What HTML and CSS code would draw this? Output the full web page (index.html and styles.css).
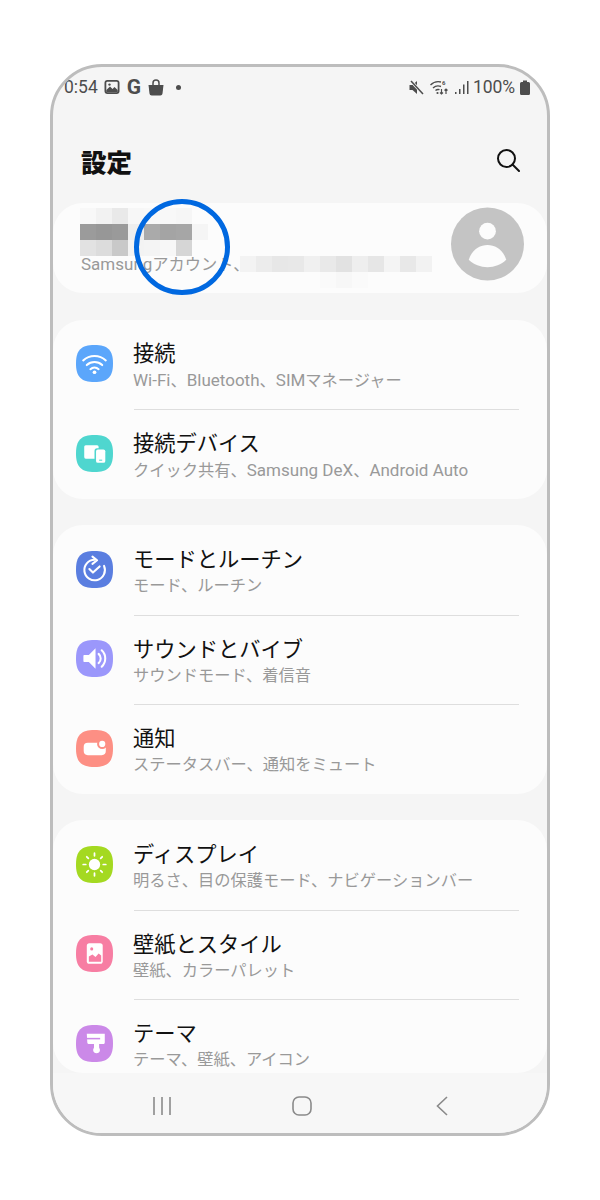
FILE: index.html
```html
<!DOCTYPE html>
<html lang="ja">
<head>
<meta charset="utf-8">
<title>設定</title>
<link rel="stylesheet" href="styles.css">
</head>
<body>
<div class="phone">
  <div class="status">
    <span class="time">0:54</span>
    <svg class="st-img" width="16" height="16" viewBox="0 0 16 16"><rect x="0.500" y="1" width="15" height="14" rx="3" fill="#4d4d4d"/><rect x="2.300" y="2.800" width="11.400" height="10.400" rx="1" fill="#f5f5f5"/><path d="M2.300 11l3.700-3.500 2.500 2.500 2-2 3.200 3V13.200H2.300z" fill="#4d4d4d"/><circle cx="5.500" cy="5.600" r="1.200" fill="#4d4d4d"/></svg>
    <span class="st-g">G</span>
    <svg class="st-bag" width="16" height="17" viewBox="0 0 16 17"><path d="M0.500 6h15l-1 8.500c-.2 1.200-1 2-2.200 2H3.700C2.500 16.500 1.700 15.700 1.500 14.500z" fill="#4d4d4d"/><path d="M5 6V4a3 3 0 0 1 6 0v2" fill="none" stroke="#4d4d4d" stroke-width="1.500"/></svg>
    <span class="st-dot"></span>
    <span class="st-spacer"></span>
    <svg class="st-mute" width="15" height="15" viewBox="0 0 15 15"><path d="M0.500 5h3L8 1v13L3.500 10h-3z" fill="#4d4d4d"/><path d="M2 1l12 13" stroke="#f5f5f5" stroke-width="3"/><path d="M2 1l12 13" stroke="#4d4d4d" stroke-width="1.500"/></svg>
    <svg class="st-wifi" width="19" height="17" viewBox="0 0 19 17"><g fill="none" stroke="#4d4d4d" stroke-width="1.400"><path d="M0.500 6A11 11 0 0 1 11 3"/><path d="M3 9a7.500 7.500 0 0 1 8-1.500"/><path d="M5.500 11.500a4 4 0 0 1 4-.8"/></g><circle cx="7.500" cy="14" r="1.100" fill="#4d4d4d"/><text class="st-six" x="12" y="6">6</text><path d="M11.500 10v5M10 13.500l1.500 1.500 1.500-1.500M16 15v-5M14.500 11.500l1.500-1.500 1.500 1.500" fill="none" stroke="#4d4d4d" stroke-width="1.200"/></svg>
    <svg class="st-signal" width="14" height="15" viewBox="0 0 14 15"><g fill="#4d4d4d"><rect x="0" y="12" width="1.500" height="2"/><rect x="4" y="9" width="1.500" height="5"/><rect x="8" y="4.500" width="1.500" height="9.500"/><rect x="12" y="1" width="1.500" height="13"/></g></svg>
    <span class="pct">100%</span>
    <svg class="st-bat" width="10" height="15" viewBox="0 0 10 15"><path d="M3 0.500h4V2h1.500A1.500 1.500 0 0 1 10 3.500V13.500A1.500 1.500 0 0 1 8.500 15H1.500A1.500 1.500 0 0 1 0 13.500V3.500A1.500 1.500 0 0 1 1.500 2H3z" fill="#4d4d4d"/></svg>
  </div>

  <header class="topbar">
    <h1 class="title">設定</h1>
    <svg class="search" width="24" height="24" viewBox="0 0 24 24"><circle cx="10.500" cy="10.500" r="8.500" fill="none" stroke="#111" stroke-width="2"/><path d="M16.500 16.500L23 23" stroke="#111" stroke-width="2" stroke-linecap="round"/></svg>
  </header>

  <div class="scroll">
    <section class="card profile">
      <div class="profile-text">
        <div class="profile-account"><span class="lat">Samsung</span>アカウント、</div>
      </div>
      <svg class="avatar" width="73" height="74" viewBox="0 0 74 74"><circle cx="37" cy="37" r="37" fill="#c4c4c4"/><circle cx="37" cy="24" r="8.500" fill="#fcfcfc"/><path d="M18 53c3-10 11-15 19-15s16 5 19 15c-5 5-12 7.500-19 7.500S23 58 18 53z" fill="#fcfcfc"/></svg>
      <svg class="mosaic" width="360" height="85" viewBox="0 0 360 85">
        <g fill="#f8f8f8"><rect x="0" y="0" width="16" height="16"/><rect x="64" y="0" width="16" height="16"/></g>
        <rect x="16" y="0" width="16" height="16" fill="#f2f2f2"/><rect x="32" y="0" width="16" height="16" fill="#e9e9e9"/><rect x="48" y="0" width="16" height="16" fill="#f7f7f7"/><rect x="80" y="0" width="16" height="16" fill="#f8f8f8"/><rect x="96" y="0" width="16" height="16" fill="#f6f6f6"/>
        <rect x="0" y="16" width="16" height="16" fill="#9b9b9b"/><rect x="16" y="16" width="16" height="16" fill="#979797"/><rect x="32" y="16" width="16" height="16" fill="#9a9a9a"/><rect x="48" y="16" width="16" height="16" fill="#eeeeee"/><rect x="64" y="16" width="16" height="16" fill="#aaaaaa"/><rect x="80" y="16" width="16" height="16" fill="#a4a4a4"/><rect x="96" y="16" width="16" height="16" fill="#a6a6a6"/><rect x="112" y="16" width="16" height="16" fill="#f5f5f5"/>
        <rect x="0" y="32" width="16" height="16" fill="#e2e2e2"/><rect x="16" y="32" width="16" height="16" fill="#dcdcdc"/><rect x="32" y="32" width="16" height="16" fill="#c9c9c9"/><rect x="48" y="32" width="16" height="16" fill="#f3f3f3"/><rect x="64" y="32" width="16" height="16" fill="#f4f4f4"/><rect x="80" y="32" width="16" height="16" fill="#f7f7f7"/><rect x="96" y="32" width="16" height="16" fill="#d6d6d6"/>
        <rect x="160" y="48" width="16" height="16" fill="#f3f3f3"/><rect x="176" y="48" width="16" height="16" fill="#ececec"/><rect x="192" y="48" width="16" height="16" fill="#e7e7e7"/><rect x="208" y="48" width="16" height="16" fill="#e8e8e8"/><rect x="224" y="48" width="16" height="16" fill="#f0f0f0"/><rect x="240" y="48" width="16" height="16" fill="#e9e9e9"/><rect x="256" y="48" width="16" height="16" fill="#e2e2e2"/><rect x="272" y="48" width="16" height="16" fill="#eeeeee"/><rect x="288" y="48" width="16" height="16" fill="#e6e6e6"/><rect x="304" y="48" width="16" height="16" fill="#f4f4f4"/><rect x="320" y="48" width="16" height="16" fill="#e8e8e8"/><rect x="336" y="48" width="16" height="16" fill="#f2f2f2"/>
        <rect x="240" y="64" width="16" height="16" fill="#fafafa"/><rect x="256" y="64" width="16" height="16" fill="#f7f7f7"/><rect x="272" y="64" width="16" height="16" fill="#fafafa"/>
      </svg>
    </section>

    <section class="card">
      <div class="row">
        <svg class="icon" viewBox="0 0 36 36"><path class="sq sq-wifi" d="M18 0C31 0 36 5 36 18S31 36 18 36 0 31 0 18 5 0 18 0z"/><g class="line"><path d="M7 15A16 16 0 0 1 29 15"/><path d="M10.500 19.500A11 11 0 0 1 25.500 19.500"/><path d="M14 23.500A6 6 0 0 1 22 23.500"/></g><circle class="fill" cx="18" cy="26.500" r="1.800"/></svg>
        <div class="texts"><div class="t">接続</div><div class="s"><span class="lat">Wi-Fi</span>、<span class="lat">Bluetooth</span>、<span class="lat">SIM</span>マネージャー</div></div>
      </div>
      <div class="row">
        <svg class="icon" viewBox="0 0 36 36"><path class="sq sq-dev" d="M18 0C31 0 36 5 36 18S31 36 18 36 0 31 0 18 5 0 18 0z"/><rect class="fill" x="8" y="10" width="14" height="13" rx="1.500"/><rect x="18" y="13" width="12" height="15" rx="2.500" fill="#4fd6cf"/><rect class="fill" x="19.500" y="14" width="9" height="13" rx="1.800"/><rect x="22.500" y="24" width="3" height="1" fill="#4fd6cf"/></svg>
        <div class="texts"><div class="t">接続デバイス</div><div class="s">クイック共有、<span class="lat">Samsung DeX</span>、<span class="lat">Android Auto</span></div></div>
      </div>
    </section>

    <section class="card">
      <div class="row">
        <svg class="icon" viewBox="0 0 36 36"><path class="sq sq-mode" d="M18 0C31 0 36 5 36 18S31 36 18 36 0 31 0 18 5 0 18 0z"/><g class="line"><path d="M18 8.500A10 10 0 1 0 27.300 14.500"/><path d="M16 5.500L20.500 9L16 12.500"/><path d="M13 17.500L16.500 21L23 15"/></g></svg>
        <div class="texts"><div class="t">モードとルーチン</div><div class="s">モード、ルーチン</div></div>
      </div>
      <div class="row">
        <svg class="icon" viewBox="0 0 36 36"><path class="sq sq-snd" d="M18 0C31 0 36 5 36 18S31 36 18 36 0 31 0 18 5 0 18 0z"/><path class="fill" d="M8 14.500h4.500L19 8v20l-6.500-6.500H8a.8.8 0 0 1-.8-.8v-5.400a.8.8 0 0 1 .8-.8z"/><g class="line"><path d="M22 13.500a6 6 0 0 1 0 9"/><path d="M25 10a11 11 0 0 1 0 16"/></g></svg>
        <div class="texts"><div class="t">サウンドとバイブ</div><div class="s">サウンドモード、着信音</div></div>
      </div>
      <div class="row">
        <svg class="icon" viewBox="0 0 36 36"><path class="sq sq-noti" d="M18 0C31 0 36 5 36 18S31 36 18 36 0 31 0 18 5 0 18 0z"/><rect class="fill" x="7.500" y="12.500" width="21.500" height="12" rx="4"/><circle cx="25.500" cy="13.500" r="5" fill="#fd8f84"/><circle class="fill" cx="25.500" cy="13.500" r="3"/></svg>
        <div class="texts"><div class="t">通知</div><div class="s">ステータスバー、通知をミュート</div></div>
      </div>
    </section>

    <section class="card">
      <div class="row">
        <svg class="icon" viewBox="0 0 36 36"><path class="sq sq-disp" d="M18 0C31 0 36 5 36 18S31 36 18 36 0 31 0 18 5 0 18 0z"/><circle class="fill" cx="18" cy="18" r="5.500"/><g class="line thin"><path d="M18 7v2.500M18 26.500V29M7 18h2.500M26.500 18H29M10.500 10.500l1.500 1.500M24 24l1.500 1.500M10.500 25.500l1.500-1.500M24 12l1.500-1.500"/></g></svg>
        <div class="texts"><div class="t">ディスプレイ</div><div class="s">明るさ、目の保護モード、ナビゲーションバー</div></div>
      </div>
      <div class="row">
        <svg class="icon" viewBox="0 0 36 36"><path class="sq sq-wall" d="M18 0C31 0 36 5 36 18S31 36 18 36 0 31 0 18 5 0 18 0z"/><rect class="fill" x="10.500" y="8" width="15.500" height="20" rx="2.500"/><circle cx="15.300" cy="13.500" r="1.500" fill="#f77ea3"/><path d="M12.500 26v-5l3.500-2 3 2.500 3-3.500 2.500 2v6z" fill="#f77ea3"/></svg>
        <div class="texts"><div class="t">壁紙とスタイル</div><div class="s">壁紙、カラーパレット</div></div>
      </div>
      <div class="row">
        <svg class="icon" viewBox="0 0 36 36"><path class="sq sq-theme" d="M18 0C31 0 36 5 36 18S31 36 18 36 0 31 0 18 5 0 18 0z"/><path class="fill" d="M10.500 8.500h17.500v8.500c0 1-.8 1.500-1.800 1.500H22.500v3.500c0 .8.800 1.200.8 2.500 0 1.800-1.600 3-3.300 3s-3.300-1.200-3.300-3c0-1.300.8-1.700.8-2.500v-3.500h-4.500c-1 0-2-.5-2-1.500z"/><rect x="10.500" y="12.500" width="13" height="1.500" fill="#cb89e8"/></svg>
        <div class="texts"><div class="t">テーマ</div><div class="s">テーマ、壁紙、アイコン</div></div>
      </div>
    </section>
  </div>

  <nav class="nav">
    <svg width="18" height="18" viewBox="0 0 18 18"><path d="M1 0v18M9 0v18M17 0v18" stroke="#8a8a8a" stroke-width="1.600" fill="none"/></svg>
    <svg width="20" height="20" viewBox="0 0 20 20"><rect x="1" y="1" width="18" height="18" rx="6" stroke="#8a8a8a" stroke-width="1.600" fill="none"/></svg>
    <svg width="12" height="20" viewBox="0 0 12 20"><path d="M11 1L1.500 10L11 19" stroke="#8a8a8a" stroke-width="1.600" fill="none"/></svg>
  </nav>

  <div class="ring"></div>
</div>
</body>
</html>
```

FILE: styles.css
```css
* { box-sizing: border-box; }
html, body { margin: 0; padding: 0; background: #fff; }
body { font-family: Roboto, "Noto Sans CJK JP", sans-serif; }

.phone {
  position: relative;
  width: 500px;
  height: 1072px;
  margin: 64px 50px;
  border: 3px solid #bdbdbd;
  border-radius: 52px;
  background: #f5f5f5;
  overflow: hidden;
  display: flex;
  flex-direction: column;
}

.status {
  height: 40px;
  padding: 0 17px 0 11px;
  display: flex;
  align-items: center;
  flex: none;
}
.time, .pct { font-size: 17.500px; color: #4d4d4d; }
.st-img { margin-left: 6px; }
.st-g { font: 700 21px Roboto, sans-serif; color: #4d4d4d; margin-left: 7px; width: 15px; }
.st-bag { margin-left: 6px; }
.st-dot { width: 5px; height: 5px; border-radius: 50%; background: #4d4d4d; margin-left: 12px; }
.st-spacer { flex: 1; }
.st-wifi { margin-left: 6px; }
.st-six { font: 700 6px Roboto, sans-serif; fill: #4d4d4d; }
.st-signal { margin-left: 6px; }
.pct { margin-left: 4px; margin-right: 2px; letter-spacing: -0.100px; }
.st-bat { margin-left: 3px; }

.topbar {
  height: 96px;
  flex: none;
  padding: 0 27px 0 28px;
  display: flex;
  align-items: center;
  justify-content: space-between;
}
.title {
  margin: 12px 0 0;
  font-family: "Noto Sans CJK JP", sans-serif;
  font-size: 25.500px;
  font-weight: 900;
  color: #111;
  line-height: 1;
}
.search { margin-top: 10px; }

.scroll {
  flex: 1;
  min-height: 0;
  overflow: hidden;
  display: flex;
  flex-direction: column;
  gap: 26.500px;
  border-radius: 0 0 30px 30px;
}
.card {
  flex: none;
  background: #fcfcfc;
  border-radius: 30px;
}
.profile {
  position: relative;
  height: 90px;
  display: flex;
  align-items: center;
  justify-content: space-between;
  padding: 0 23px 0 28px;
}
.profile-account {
  font-size: 16.250px;
  color: #999;
  margin-top: 29px;
  font-family: Roboto, "Noto Sans CJK JP", sans-serif;
}
.lat { font-size: 17px; }
.avatar { margin-top: -8px; flex: none; }
.mosaic { position: absolute; left: 27px; top: 5px; }

.row {
  height: 89.500px;
  display: flex;
  align-items: center;
  padding-left: 23px;
  position: relative;
}
.row + .row::before {
  content: "";
  position: absolute;
  left: 81px;
  right: 28px;
  top: 0;
  height: 1px;
  background: #dedede;
}
.icon { width: 37px; height: 37px; flex: none; margin-top: -1px; }
.texts { margin: 3px 0 0 20px; }
.t {
  font-size: 21.250px;
  line-height: 28px;
  color: #111;
  font-family: "Noto Sans CJK JP", sans-serif;
}
.s {
  font-size: 16.250px;
  line-height: 24px;
  margin-top: 2px;
  color: #999;
  font-family: Roboto, "Noto Sans CJK JP", sans-serif;
}

.sq-wifi { fill: #5ba6fb; }
.sq-dev { fill: #4fd6cf; }
.sq-mode { fill: #5a7ee0; }
.sq-snd { fill: #9b97fb; }
.sq-noti { fill: #fd8f84; }
.sq-disp { fill: #a4d921; }
.sq-wall { fill: #f77ea3; }
.sq-theme { fill: #cb89e8; }
.fill { fill: #fff; }
.line { fill: none; stroke: #fff; stroke-width: 2; stroke-linecap: round; stroke-linejoin: round; }
.thin { stroke-width: 1.700; }

.nav {
  height: 60px;
  flex: none;
  background: #f7f7f7;
  display: flex;
  align-items: center;
  gap: 121px;
  padding: 6px 0 0 100px;
}
.nav svg:last-child { margin-left: 3px; }

.ring {
  position: absolute;
  left: 81px;
  top: 132px;
  width: 96px;
  height: 96px;
  border: 5px solid #0068e0;
  border-radius: 50%;
}
```
